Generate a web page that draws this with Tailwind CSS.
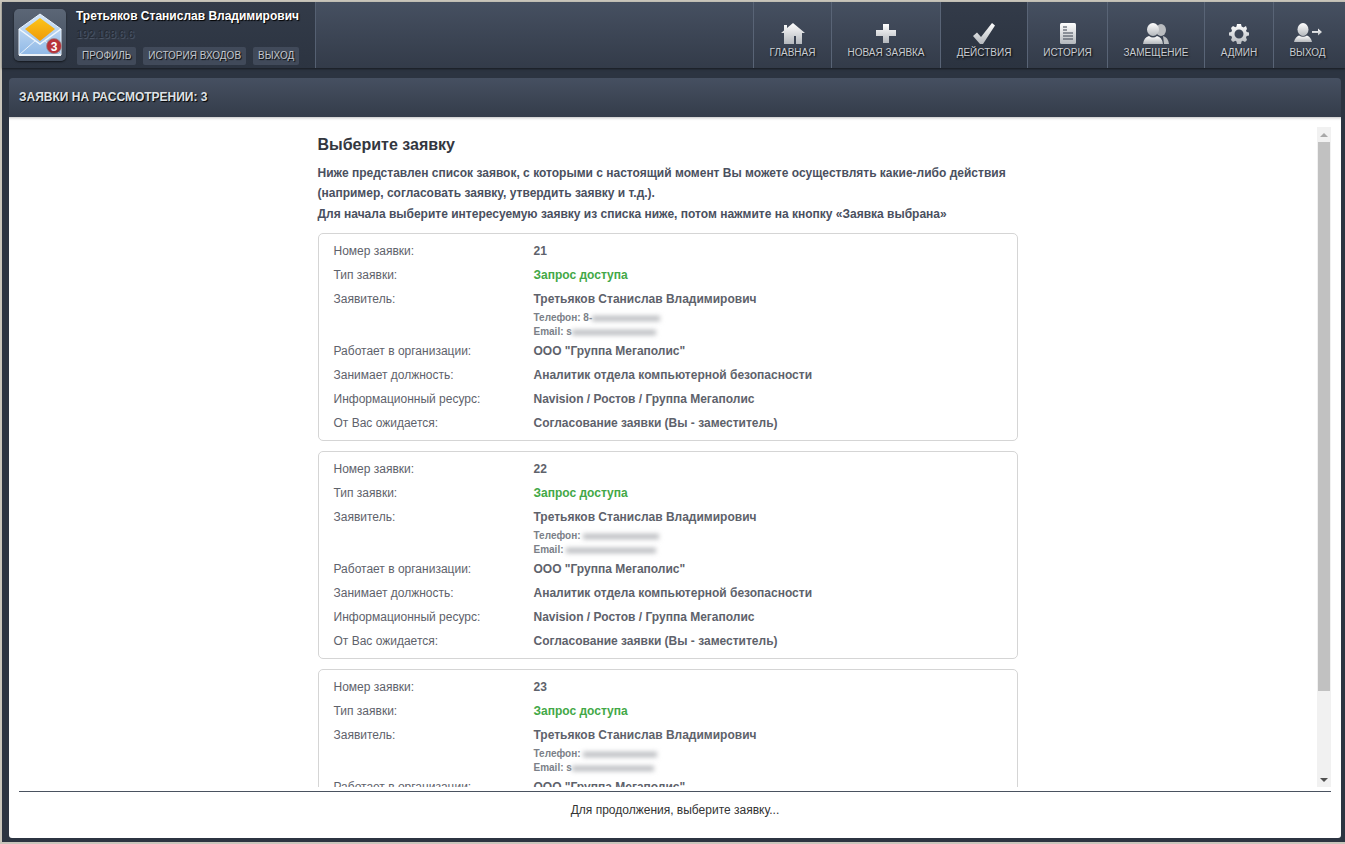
<!DOCTYPE html>
<html lang="ru">
<head>
    <meta charset="UTF-8">
    <meta name="viewport" content="width=device-width, initial-scale=1.0">
    <title>Заявки на рассмотрении</title>
    <script src="https://cdn.jsdelivr.net/npm/@tailwindcss/browser@4"></script>
</head>
<body class="h-[844px] overflow-hidden bg-[#c9c5bb] font-['Liberation_Sans',sans-serif]">
    <svg width="0" height="0" class="absolute">
        <defs>
            <linearGradient id="ico" x1="0" y1="0" x2="0" y2="1">
                <stop offset="0" stop-color="#ffffff"/>
                <stop offset="1" stop-color="#b4b8bd"/>
            </linearGradient>
            <linearGradient id="env" x1="0" y1="0" x2="0" y2="1">
                <stop offset="0" stop-color="#d4e6f8"/>
                <stop offset="1" stop-color="#8fb8e6"/>
            </linearGradient>
            <linearGradient id="gold" x1="0" y1="0" x2="0" y2="1">
                <stop offset="0" stop-color="#fcc419"/>
                <stop offset="1" stop-color="#ee9a0a"/>
            </linearGradient>
        </defs>
    </svg>

    <div class="ml-[2px] mt-[2px] h-[840px] bg-[#2c3441] flex flex-col">
        <!-- шапка -->
        <header class="h-[66px] flex shrink-0 bg-gradient-to-b from-[#465061] to-[#333b49] shadow-[0_1px_2px_rgba(0,0,0,0.5)]">
            <div class="w-[314px] shrink-0 flex pl-[12px] pt-[7px] bg-gradient-to-b from-[#333b49] to-[#2c3441] border-r border-[#556072]">
                <div class="w-[52px] h-[52px] rounded-[5px] bg-gradient-to-b from-[#5b6676] to-[#434d5c] flex items-center justify-center shadow-[0_1px_2px_rgba(0,0,0,0.6)]">
                    <svg width="46" height="46" viewBox="0 0 46 46">
                        <path d="M2 17 L23 2 L44 17 V43 H2 Z" fill="url(#env)" stroke="#eaf3fc" stroke-width="1"/>
                        <path d="M8 17 L23 6 L38 17 L23 29 Z" fill="url(#gold)"/>
                        <path d="M2 17 L23 32 L44 17" fill="none" stroke="#f2f8fe" stroke-width="1.5"/>
                        <path d="M2 43 L19 28 M44 43 L27 28" stroke="#e8f1fb" stroke-width="1"/>
                        <rect x="2" y="42" width="42" height="2" fill="#eef2f6"/>
                        <circle cx="37" cy="34" r="7.5" fill="#b8323a" stroke="#9a8a8e" stroke-width="0.8"/>
                        <text x="37" y="38.5" text-anchor="middle" font-size="12" font-weight="700" fill="#ffffff" font-family="Liberation Sans">3</text>
                    </svg>
                </div>
                <div class="ml-[10px]">
                    <div class="text-[12px] leading-[14px] font-bold text-white [text-shadow:1px_1px_1px_#000]">Третьяков Станислав Владимирович</div>
                    <div class="mt-[4px] text-[11px] leading-[14px] text-[#232933] [text-shadow:1px_1px_1px_#566071]">192.168.6.6</div>
                    <div class="mt-[6px] flex gap-[7px] ml-[1px]">
                        <a class="h-[18px] px-[5px] rounded-[2px] bg-[#414a5a] text-[10px] leading-[18px] text-[#c2c6cc] [text-shadow:1px_1px_1px_#000]">ПРОФИЛЬ</a>
                        <a class="h-[18px] px-[5px] rounded-[2px] bg-[#414a5a] text-[10px] leading-[18px] text-[#c2c6cc] [text-shadow:1px_1px_1px_#000]">ИСТОРИЯ ВХОДОВ</a>
                        <a class="h-[18px] px-[5px] rounded-[2px] bg-[#414a5a] text-[10px] leading-[18px] text-[#c2c6cc] [text-shadow:1px_1px_1px_#000]">ВЫХОД</a>
                    </div>
                </div>
            </div>
            <div class="flex-1"></div>
            <nav class="flex pr-[4px]">
                <a class="w-[78px] border-l border-[#596476] flex flex-col items-center pt-[20px] text-[10px] leading-[12px] text-[#c8ccd2] [text-shadow:1px_1px_2px_#000]">
                    <svg class="h-[22px] w-[24px]" viewBox="0 0 24 22"><path d="M12 1 L24 11 H21 V22 H15 V14 H13 V22 H3 V11 H0 L3 8.5 V3 H6 V6 Z" fill="url(#ico)"/></svg>
                    <span class="mt-[3px]">ГЛАВНАЯ</span>
                </a>
                <a class="w-[109px] border-l border-[#596476] flex flex-col items-center pt-[21px] text-[10px] leading-[12px] text-[#c8ccd2] [text-shadow:1px_1px_2px_#000]">
                    <svg class="h-[21px] w-[20px]" viewBox="0 0 20 21"><path d="M7 1 H13 V7 H20 V13 H13 V20 H7 V13 H0 V7 H7 Z" fill="url(#ico)"/></svg>
                    <span class="mt-[3px]">НОВАЯ ЗАЯВКА</span>
                </a>
                <a class="w-[87px] border-l border-[#596476] flex flex-col items-center pt-[21px] text-[10px] leading-[12px] text-[#c8ccd2] [text-shadow:1px_1px_2px_#000] bg-gradient-to-b from-[#333b49] to-[#2b3340]">
                    <svg class="h-[21px] w-[24px]" viewBox="0 0 24 21"><path d="M1 13 L5 9.5 L9 14 L20 0 L23 2.5 L11 21 H8 Z" fill="url(#ico)"/></svg>
                    <span class="mt-[3px]">ДЕЙСТВИЯ</span>
                </a>
                <a class="w-[80px] border-l border-[#596476] flex flex-col items-center pt-[21px] text-[10px] leading-[12px] text-[#c8ccd2] [text-shadow:1px_1px_2px_#000]">
                    <svg class="h-[21px] w-[16px]" viewBox="0 0 16 21"><rect width="16" height="21" rx="1.5" fill="url(#ico)"/><path d="M3 4 H7 M3 7 H7 M3 10 H13 M3 13 H13 M3 16 H13" stroke="#3a4250" stroke-width="1.2"/></svg>
                    <span class="mt-[3px]">ИСТОРИЯ</span>
                </a>
                <a class="w-[97px] border-l border-[#596476] flex flex-col items-center pt-[21px] text-[10px] leading-[12px] text-[#c8ccd2] [text-shadow:1px_1px_2px_#000]">
                    <svg class="h-[21px] w-[26px]" viewBox="0 0 26 21"><ellipse cx="18" cy="7" rx="5" ry="6" fill="#b9bcc0"/><path d="M20 13 Q25 14 26 21 H21 Z" fill="#b9bcc0"/><ellipse cx="10" cy="6.5" rx="6" ry="6.5" fill="url(#ico)"/><path d="M0 21 Q1 14 6 13 Q10 16 14 13 Q19 14 20 21 Z" fill="url(#ico)"/></svg>
                    <span class="mt-[3px]">ЗАМЕЩЕНИЕ</span>
                </a>
                <a class="w-[69px] border-l border-[#596476] flex flex-col items-center pt-[22px] text-[10px] leading-[12px] text-[#c8ccd2] [text-shadow:1px_1px_2px_#000]">
                    <svg class="h-[20px] w-[20px]" viewBox="0 0 20 20"><path fill-rule="evenodd" d="M8 0 H12 L12.6 2.6 L14.6 3.4 L17 2 L18 5 L17 6.5 L17.7 8 L20 8.5 V11.5 L17.7 12 L17 13.5 L18 16 L16 18 L13.6 16.8 L12.5 17.4 L12 20 H8 L7.5 17.4 L6.4 16.8 L4 18 L2 16 L3 13.5 L2.3 12 L0 11.5 V8.5 L2.3 8 L3 6.5 L2 4 L4 2 L6.4 3.2 L7.5 2.6 Z M10 5.5 A4.5 4.5 0 1 0 10 14.5 A4.5 4.5 0 1 0 10 5.5 Z" fill="url(#ico)"/></svg>
                    <span class="mt-[3px]">АДМИН</span>
                </a>
                <a class="w-[68px] border-l border-[#596476] flex flex-col items-center pt-[21px] text-[10px] leading-[12px] text-[#c8ccd2] [text-shadow:1px_1px_2px_#000]">
                    <svg class="h-[21px] w-[28px]" viewBox="0 0 28 21"><ellipse cx="9" cy="6.5" rx="5.5" ry="6.5" fill="url(#ico)"/><path d="M0 19 Q1 14 5 12.5 Q9 15 13 12.5 Q17 14 18 19 Z" fill="url(#ico)"/><path d="M18 8 H24 V5.5 L28 9 L24 12.5 V10 H18 Z" fill="url(#ico)"/></svg>
                    <span class="mt-[3px]">ВЫХОД</span>
                </a>
            </nav>
        </header>

        <!-- заголовок панели -->
        <div class="mt-[10px] ml-[7px] mr-[4px] h-[39px] shrink-0 rounded-t-[4px] bg-gradient-to-b from-[#465061] to-[#343c4a] pl-[10px] text-[12px] leading-[38px] font-bold text-[#dfe2e6] [text-shadow:1px_1px_1px_#000]">ЗАЯВКИ НА РАССМОТРЕНИИ: 3</div>

        <!-- содержимое -->
        <main class="ml-[7px] mr-[4px] h-[721px] shrink-0 bg-white rounded-b-[3px] flex flex-col pl-[10px] pr-[10px] pt-[10px] shadow-[inset_0_3px_3px_-2px_rgba(0,0,0,0.25)]">
            <div class="h-[660px] shrink-0 flex overflow-hidden">
                <div class="flex-1 overflow-hidden flex justify-center">
                    <div class="w-[700px] -ml-[1px] shrink-0 text-[12px] text-[#5e626b]">
                        <h1 class="mt-[8px] text-[16px] leading-[20px] font-bold text-[#33373f]">Выберите заявку</h1>
                        <p class="mt-[7.5px] font-bold leading-[20.5px] text-[#4a5060]">Ниже представлен список заявок, с которыми с настоящий момент Вы можете осуществлять какие-либо действия<br>(например, согласовать заявку, утвердить заявку и т.д.).<br>Для начала выберите интересуемую заявку из списка ниже, потом нажмите на кнопку «Заявка выбрана»</p>

                        <div class="mt-[9px] h-[208px] rounded-[5px] border border-[#d5d5d5] pl-[15px] pt-[5px]">
                            <div class="flex h-[24px] leading-[24px]"><div class="w-[200px]">Номер заявки:</div><div class="font-bold">21</div></div>
                            <div class="flex h-[24px] leading-[24px]"><div class="w-[200px]">Тип заявки:</div><div class="font-bold text-[#43a847]">Запрос доступа</div></div>
                            <div class="flex h-[52px]"><div class="w-[200px] leading-[24px]">Заявитель:</div>
                                <div>
                                    <div class="font-bold leading-[24px]">Третьяков Станислав Владимирович</div>
                                    <div class="text-[10px] leading-[14px] font-bold text-[#7b7f88] flex items-center">Телефон: 8-<span class="w-[68px] h-[5px] bg-[#b5b7bb] blur-[2.5px]"></span></div>
                                    <div class="text-[10px] leading-[14px] font-bold text-[#7b7f88] flex items-center">Email: s<span class="w-[84px] h-[5px] bg-[#b5b7bb] blur-[2.5px]"></span></div>
                                </div>
                            </div>
                            <div class="flex h-[24px] leading-[24px]"><div class="w-[200px]">Работает в организации:</div><div class="font-bold">ООО "Группа Мегаполис"</div></div>
                            <div class="flex h-[24px] leading-[24px]"><div class="w-[200px]">Занимает должность:</div><div class="font-bold">Аналитик отдела компьютерной безопасности</div></div>
                            <div class="flex h-[24px] leading-[24px]"><div class="w-[200px]">Информационный ресурс:</div><div class="font-bold">Navision / Ростов / Группа Мегаполис</div></div>
                            <div class="flex h-[24px] leading-[24px]"><div class="w-[200px]">От Вас ожидается:</div><div class="font-bold">Согласование заявки (Вы - заместитель)</div></div>
                        </div>

                        <div class="mt-[10px] h-[208px] rounded-[5px] border border-[#d5d5d5] pl-[15px] pt-[5px]">
                            <div class="flex h-[24px] leading-[24px]"><div class="w-[200px]">Номер заявки:</div><div class="font-bold">22</div></div>
                            <div class="flex h-[24px] leading-[24px]"><div class="w-[200px]">Тип заявки:</div><div class="font-bold text-[#43a847]">Запрос доступа</div></div>
                            <div class="flex h-[52px]"><div class="w-[200px] leading-[24px]">Заявитель:</div>
                                <div>
                                    <div class="font-bold leading-[24px]">Третьяков Станислав Владимирович</div>
                                    <div class="text-[10px] leading-[14px] font-bold text-[#7b7f88] flex items-center">Телефон: <span class="ml-[2px] w-[76px] h-[5px] bg-[#b5b7bb] blur-[2.5px]"></span></div>
                                    <div class="text-[10px] leading-[14px] font-bold text-[#7b7f88] flex items-center">Email: <span class="ml-[2px] w-[90px] h-[5px] bg-[#b5b7bb] blur-[2.5px]"></span></div>
                                </div>
                            </div>
                            <div class="flex h-[24px] leading-[24px]"><div class="w-[200px]">Работает в организации:</div><div class="font-bold">ООО "Группа Мегаполис"</div></div>
                            <div class="flex h-[24px] leading-[24px]"><div class="w-[200px]">Занимает должность:</div><div class="font-bold">Аналитик отдела компьютерной безопасности</div></div>
                            <div class="flex h-[24px] leading-[24px]"><div class="w-[200px]">Информационный ресурс:</div><div class="font-bold">Navision / Ростов / Группа Мегаполис</div></div>
                            <div class="flex h-[24px] leading-[24px]"><div class="w-[200px]">От Вас ожидается:</div><div class="font-bold">Согласование заявки (Вы - заместитель)</div></div>
                        </div>

                        <div class="mt-[10px] h-[208px] rounded-[5px] border border-[#d5d5d5] pl-[15px] pt-[5px]">
                            <div class="flex h-[24px] leading-[24px]"><div class="w-[200px]">Номер заявки:</div><div class="font-bold">23</div></div>
                            <div class="flex h-[24px] leading-[24px]"><div class="w-[200px]">Тип заявки:</div><div class="font-bold text-[#43a847]">Запрос доступа</div></div>
                            <div class="flex h-[52px]"><div class="w-[200px] leading-[24px]">Заявитель:</div>
                                <div>
                                    <div class="font-bold leading-[24px]">Третьяков Станислав Владимирович</div>
                                    <div class="text-[10px] leading-[14px] font-bold text-[#7b7f88] flex items-center">Телефон: <span class="ml-[2px] w-[74px] h-[5px] bg-[#b5b7bb] blur-[2.5px]"></span></div>
                                    <div class="text-[10px] leading-[14px] font-bold text-[#7b7f88] flex items-center">Email: s<span class="w-[82px] h-[5px] bg-[#b5b7bb] blur-[2.5px]"></span></div>
                                </div>
                            </div>
                            <div class="flex h-[24px] leading-[24px]"><div class="w-[200px]">Работает в организации:</div><div class="font-bold">ООО "Группа Мегаполис"</div></div>
                        </div>
                    </div>
                </div>
                <!-- полоса прокрутки -->
                <div class="w-[14px] shrink-0 bg-[#f1f1f1] flex flex-col items-center">
                    <div class="h-[15px] flex items-center justify-center"><div class="w-0 h-0 border-x-[4px] border-x-transparent border-b-[4px] border-b-[#a8a8a8]"></div></div>
                    <div class="w-[12px] h-[549px] bg-[#c1c1c1]"></div>
                    <div class="flex-1"></div>
                    <div class="h-[15px] flex items-center justify-center"><div class="w-0 h-0 border-x-[4px] border-x-transparent border-t-[4px] border-t-[#505050]"></div></div>
                </div>
            </div>
            <div class="mt-[4px] h-[47px] border-t border-[#4a5260] text-center text-[12px] leading-[36px] text-[#333333]">Для продолжения, выберите заявку...</div>
        </main>
    </div>
</body>
</html>
